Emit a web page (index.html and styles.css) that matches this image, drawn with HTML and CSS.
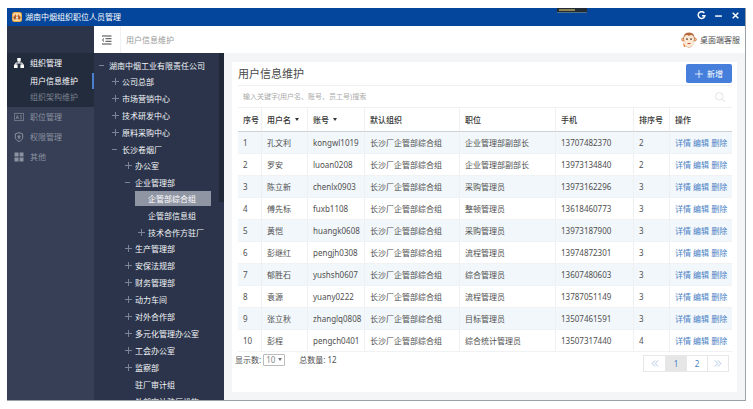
FILE: index.html
```html
<!DOCTYPE html>
<html lang="zh-CN">
<head>
<meta charset="utf-8">
<title>湖南中烟组织职位人员管理</title>
<link rel="stylesheet" href="styles.css">
</head>
<body>
<div class="window">
  <header class="titlebar">
    <svg class="logo" viewBox="0 0 20 20"><rect width="20" height="20" rx="5" fill="#e9a94b"/><rect x="2" y="2" width="16" height="16" rx="4" fill="#f6d9a0"/><path d="M3 9h14v4H3z" fill="#5a4a3c"/><path d="M6 4l3 4-2 7H4zM14 4l-3 4 2 7h3z" fill="#c2571f"/><circle cx="10" cy="11" r="2" fill="#fff"/></svg>
    <h1>湖南中烟组织职位人员管理</h1>
    <span class="notch"></span>
    <div class="controls">
      <button aria-label="刷新"><svg viewBox="0 0 8 8"><path d="M6.500 1.800A3 3 0 1 0 7 4.300H4.500"/></svg></button>
      <button aria-label="最小化"><svg viewBox="0 0 8 8"><path d="M1 4.500h6"/></svg></button>
      <button aria-label="关闭"><svg viewBox="0 0 8 8"><path d="M1.500 1.500l5 5M6.500 1.500l-5 5"/></svg></button>
    </div>
  </header>
  <div class="body">
    <nav class="sidebar">
      <div class="sidebar-top"></div>
      <div class="group">
        <a class="item on" href="#"><svg viewBox="0 0 10 10"><path d="M3.300 0h3.400v3.600H3.300zM0 6.400h3.600V10H0zM6.400 6.400H10V10H6.400z" fill="currentColor"/><path d="M5 3v2M1.800 7V5h6.400v2" fill="none" stroke="currentColor"/></svg>组织管理</a>
        <a class="sub on" href="#">用户信息维护</a>
        <a class="sub" href="#">组织架构维护</a>
      </div>
      <a class="item" href="#"><svg viewBox="0 0 10 10" fill="none" stroke="currentColor" stroke-width=".7"><path d="M.4 1.400h9.200v7.200H.4zM2 7l1.300-3.500L4.600 7M2.400 5.800h1.800M6 3.500h1.500M6 5h2M6 6.800h2"/></svg>职位管理</a>
      <a class="item" href="#"><svg viewBox="0 0 10 10" fill="none" stroke="currentColor"><path d="M5 .6l3.700 1.300v3.300c0 2-1.600 3.400-3.700 4.300-2.100-.9-3.700-2.300-3.700-4.300V1.900z"/><path d="M3.400 4.300h3.200M5 2.800v4.200M3.700 5.800h2.600" stroke-width=".9"/></svg>权限管理</a>
      <a class="item" href="#"><svg viewBox="0 0 10 10"><path d="M.5 .5h4.100v4.100H.5zM5.600 .5h3.900v4.100H5.600zM.5 5.600h4.100v3.900H.5zM5.600 5.600h3.900v3.900H5.600z" fill="currentColor"/></svg>其他</a>
    </nav>
    <div class="main">
      <div class="topbar">
        <button class="fold" aria-label="收起菜单"><svg viewBox="0 0 10 10"><path d="M0 1h9.500M3.500 3.700h6M3.500 6.300h6M0 9h9.500M2 3.500L.4 5 2 6.500"/></svg></button>
        <span class="crumb">用户信息维护</span>
        <a class="service" href="#"><svg viewBox="0 0 32 32"><circle cx="4.500" cy="15" r="4" fill="#d98e5b"/><circle cx="27.500" cy="15" r="4" fill="#d98e5b"/><circle cx="4.500" cy="15" r="2" fill="#f8d5b0"/><circle cx="27.500" cy="15" r="2" fill="#f8d5b0"/><path d="M16 1C7 1 4 8 5 16s5 15 11 15 10-7 11-15S25 1 16 1z" fill="#b4683d"/><path d="M16 8c-4-4-10-2-10 5 0 3 1 4 0 7 0 7 4 10 10 10s10-3 10-10c-1-3 0-4 0-7 0-7-6-9-10-5z" fill="#fbe8d2"/><circle cx="12" cy="14" r="1.700" fill="#3c2820"/><circle cx="20" cy="14" r="1.700" fill="#3c2820"/><path d="M12 22c2 3 6 3 8 0z" fill="#c44a3a"/><path d="M4 22c2 1 4 4 5 8H6z" fill="#e47b39"/></svg>桌面端客服</a>
      </div>
      <div class="workspace">
        <aside class="tree">
          <ul>
            <li><a class="open" href="#">湖南中烟工业有限责任公司</a>
              <ul>
                <li><a class="shut" href="#">公司总部</a></li>
                <li><a class="shut" href="#">市场营销中心</a></li>
                <li><a class="shut" href="#">技术研发中心</a></li>
                <li><a class="shut" href="#">原料采购中心</a></li>
                <li><a class="open" href="#">长沙卷烟厂</a>
                  <ul>
                    <li><a class="shut" href="#">办公室</a></li>
                    <li><a class="open" href="#">企业管理部</a>
                      <ul>
                        <li><a class="selected" href="#">企管部综合组</a></li>
                        <li><a href="#">企管部信息组</a></li>
                        <li><a class="shut" href="#">技术合作方驻厂</a></li>
                      </ul>
                    </li>
                    <li><a class="shut" href="#">生产管理部</a></li>
                    <li><a class="shut" href="#">安保法规部</a></li>
                    <li><a class="shut" href="#">财务管理部</a></li>
                    <li><a class="shut" href="#">动力车间</a></li>
                    <li><a class="shut" href="#">对外合作部</a></li>
                    <li><a class="shut" href="#">多元化管理办公室</a></li>
                    <li><a class="shut" href="#">工会办公室</a></li>
                    <li><a class="shut" href="#">监察部</a></li>
                    <li><a href="#">驻厂审计组</a></li>
                    <li><a href="#">外部审计驻厂机构</a></li>
                  </ul>
                </li>
              </ul>
            </li>
          </ul>
          <span class="thumb"></span>
        </aside>
        <main class="card">
          <div class="card-head"><h2>用户信息维护</h2><button class="add"><svg viewBox="0 0 8 8"><path d="M4 0v8M0 4h8"/></svg>新增</button></div>
          <div class="search"><input type="text" aria-label="搜索" placeholder="输入关键字(用户名、账号、员工号)搜索"><button aria-label="搜索"><svg viewBox="0 0 10 10"><circle cx="4.300" cy="4.300" r="3.700"/><path d="M7 7l3 3"/></svg></button></div>
          <table>
            <colgroup><col class="c-no"><col class="c-name"><col class="c-acct"><col class="c-org"><col class="c-job"><col class="c-tel"><col class="c-sort"><col></colgroup>
            <thead><tr><th>序号</th><th>用户名<i class="caret"></i></th><th>账号<i class="caret"></i></th><th>默认组织</th><th>职位</th><th>手机</th><th>排序号</th><th>操作</th></tr></thead>
            <tbody>
              <tr><td>1</td><td>孔文利</td><td>kongwl1019</td><td>长沙厂企管部综合组</td><td>企业管理部副部长</td><td>13707482370</td><td>2</td><td><a href="#">详情</a> <a href="#">编辑</a> <a href="#">删除</a></td></tr>
              <tr><td>2</td><td>罗安</td><td>luoan0208</td><td>长沙厂企管部综合组</td><td>企业管理部副部长</td><td>13973134840</td><td>2</td><td><a href="#">详情</a> <a href="#">编辑</a> <a href="#">删除</a></td></tr>
              <tr><td>3</td><td>陈立新</td><td>chenlx0903</td><td>长沙厂企管部综合组</td><td>采购管理员</td><td>13973162296</td><td>3</td><td><a href="#">详情</a> <a href="#">编辑</a> <a href="#">删除</a></td></tr>
              <tr><td>4</td><td>傅先标</td><td>fuxb1108</td><td>长沙厂企管部综合组</td><td>整顿管理员</td><td>13618460773</td><td>3</td><td><a href="#">详情</a> <a href="#">编辑</a> <a href="#">删除</a></td></tr>
              <tr><td>5</td><td>黄恺</td><td>huangk0608</td><td>长沙厂企管部综合组</td><td>采购管理员</td><td>13973187900</td><td>3</td><td><a href="#">详情</a> <a href="#">编辑</a> <a href="#">删除</a></td></tr>
              <tr><td>6</td><td>彭继红</td><td>pengjh0308</td><td>长沙厂企管部综合组</td><td>流程管理员</td><td>13974872301</td><td>3</td><td><a href="#">详情</a> <a href="#">编辑</a> <a href="#">删除</a></td></tr>
              <tr><td>7</td><td>郁胜石</td><td>yushsh0607</td><td>长沙厂企管部综合组</td><td>综合管理员</td><td>13607480603</td><td>3</td><td><a href="#">详情</a> <a href="#">编辑</a> <a href="#">删除</a></td></tr>
              <tr><td>8</td><td>袁源</td><td>yuany0222</td><td>长沙厂企管部综合组</td><td>流程管理员</td><td>13787051149</td><td>3</td><td><a href="#">详情</a> <a href="#">编辑</a> <a href="#">删除</a></td></tr>
              <tr><td>9</td><td>张立秋</td><td>zhanglq0808</td><td>长沙厂企管部综合组</td><td>目标管理员</td><td>13507461591</td><td>3</td><td><a href="#">详情</a> <a href="#">编辑</a> <a href="#">删除</a></td></tr>
              <tr><td>10</td><td>彭程</td><td>pengch0401</td><td>长沙厂企管部综合组</td><td>综合统计管理员</td><td>13507317440</td><td>4</td><td><a href="#">详情</a> <a href="#">编辑</a> <a href="#">删除</a></td></tr>
            </tbody>
          </table>
          <div class="card-foot">
            <label for="size">显示数:</label>
            <span class="size"><select id="size"><option>10</option><option>20</option></select></span>
            <span class="total">总数量: 12</span>
            <div class="pager">
              <a href="#" aria-label="上一页"><svg viewBox="0 0 8 8"><path d="M4 .5L.8 4 4 7.500M7.500 .5L4.300 4l3.200 3.500"/></svg></a><a class="now" href="#">1</a><a href="#">2</a><a href="#" aria-label="下一页"><svg viewBox="0 0 8 8"><path d="M.5 .5L3.700 4 .5 7.500M4 .5L7.200 4 4 7.500"/></svg></a>
            </div>
          </div>
        </main>
      </div>
    </div>
  </div>
</div>
</body>
</html>
```
FILE: styles.css
```css
* { box-sizing: border-box; }
body {
  margin: 0;
  padding: 8px 7px;
  height: 100vh;
  background: #fff;
  color: #505050;
  font: 8px/16px "Noto Sans", "Noto Sans CJK SC", sans-serif;
}
a { color: inherit; text-decoration: none; }
button { padding: 0; border: 0; background: none; color: inherit; font: inherit; display: flex; align-items: center; }
h1, h2, ul { margin: 0; padding: 0; font-weight: normal; list-style: none; }
svg { display: block; flex: none; }

.window { display: flex; flex-direction: column; height: 100%; overflow: hidden; border: solid #9aa1a8; border-width: 0 1px 1px 0; }
.titlebar { position: relative; flex: none; display: flex; align-items: center; height: 18px; padding: 0 5px; background: #03469b; color: #fff; }
.logo { width: 10px; height: 10px; margin-right: 3px; }
.titlebar h1 { font-size: 8px; }
.notch { position: absolute; top: 0; right: 158px; width: 30px; height: 5px; background: #222b35; border-bottom: 1px solid #4f7186; }
.notch::after { content: ""; display: block; width: 16px; height: 2px; margin: 1px 2px; background: #8b8353; }
.controls { display: flex; gap: 8px; margin-left: auto; padding-bottom: 4px; }
.controls svg { width: 9px; height: 9px; fill: none; stroke: #fff; stroke-width: 1.3; }

.body { flex: 1; min-height: 0; display: flex; }
.sidebar { flex: none; width: 87px; background: #363f55; color: #8b92a0; }
.sidebar-top { height: 27px; background: #2b3449; }
.group { padding-bottom: 2px; background: #232c3d; }
.item { display: flex; align-items: center; gap: 6px; height: 20px; padding-left: 7px; }
.item svg { width: 10px; height: 10px; }
.sub { display: block; height: 16px; padding-left: 23px; line-height: 16px; color: #7a828f; }
.sub.on { border-right: 2px solid #4a7fd0; }
.on { color: #fff; }

.main { flex: 1; min-width: 0; display: flex; flex-direction: column; }
.topbar { flex: none; display: flex; align-items: center; height: 27px; padding-right: 5px; background: #fff; }
.fold { width: 27px; height: 27px; justify-content: center; border-right: 1px solid #f0f1f3; }
.fold svg { width: 10px; height: 10px; fill: none; stroke: #444; }
.crumb { margin-left: 5px; color: #999; }
.service { display: flex; align-items: center; gap: 3px; margin-left: auto; }
.service svg { width: 16px; height: 16px; }

.workspace { flex: 1; min-height: 0; display: flex; background: #f4f5f7; }
.tree { position: relative; flex: none; width: 130px; padding: 4px 0 0 2px; overflow: hidden; background: #2b344a; color: #f4f6f9; }
.tree ul ul { margin: -1px 0; padding-left: 13px; }
.tree a { position: relative; display: block; height: 17px; padding-left: 13px; line-height: 17px; white-space: nowrap; }
.open::before, .shut::before, .shut::after { content: ""; position: absolute; top: 8px; left: 3px; width: 7px; height: 1px; background: #7b8496; }
.open::before { width: 5px; }
.shut::after { top: 5px; left: 6px; width: 1px; height: 7px; }
.tree .selected { height: 15px; margin: 1px 13px 1px 0; line-height: 15px; background: #8f95a3; color: #fff; }
.thumb { position: absolute; top: 0; right: 0; width: 5px; height: 149px; background: #202838; }

.card { flex: 1; min-width: 0; display: flex; flex-direction: column; margin: 9px 8px 8px; padding: 0 5px 0 6px; background: #fff; }
.card-head { display: flex; align-items: center; height: 24px; border-bottom: 1px solid #f0f0f0; }
.card-head h2 { font-size: 11px; color: #4a4a4a; }
.add { justify-content: center; gap: 4px; width: 46px; height: 19px; margin-left: auto; border-radius: 2px; background: #467fdb; color: #fff; }
.add svg { width: 8px; height: 8px; fill: none; stroke: #fff; stroke-width: .8; }
.search { display: flex; align-items: center; height: 21px; padding: 0 7px 0 5px; }
.search input { flex: 1; min-width: 0; padding: 0; border: 0; outline: 0; background: none; font: inherit; font-size: 7px; }
.search input::placeholder { color: #aaa; }
.search svg { width: 10px; height: 10px; fill: none; stroke: #d9dcdf; stroke-width: .8; }

table { width: 100%; table-layout: fixed; border-collapse: separate; border-spacing: 0; border-top: 1px solid #f0f0f0; }
th, td { height: 22px; padding: 0 0 0 5px; border-right: 1px solid #eef0f2; border-bottom: 1px solid #f0f2f4; line-height: 16px; text-align: left; white-space: nowrap; }
th { height: 24px; border-bottom-color: #ccd1d6; color: #333; font-weight: 500; }
th:last-child, td:last-child { border-right: 0; }
tbody tr:nth-child(odd) { background: #f2f7fb; }
td a { color: #4a80c4; }
.c-no { width: 24px; }
.c-name { width: 46px; }
.c-acct { width: 57px; }
.c-org { width: 95px; }
.c-job { width: 96px; }
.c-tel { width: 78px; }
.c-sort { width: 36px; }
.caret { display: inline-block; margin-left: 4px; vertical-align: 2px; border: solid transparent; border-width: 3px 2px 0; border-top-color: #333; }

.card-foot { display: flex; align-items: flex-start; }
.card-foot label { margin-left: -3px; }
.size { position: relative; margin: 2px 14px 0 2px; line-height: 10px; }
.size::after { content: ""; position: absolute; top: 4px; right: 3px; border: solid transparent; border-width: 3px 2px 0; border-top-color: #777; }
.size select { appearance: none; display: block; width: 22px; height: 12px; padding: 0 0 0 2px; border: 1px solid #bbb; border-radius: 1px; background: #fff; color: #888; font: inherit; }
.pager { display: flex; margin: 3px 3px 0 auto; border: 1px solid #e6e8ea; }
.pager a { display: flex; align-items: center; justify-content: center; width: 21px; height: 15px; color: #4a80c4; }
.pager a + a { border-left: 1px solid #e6e8ea; }
.pager .now { background: #e6e6e6; }
.pager svg { width: 8px; height: 7px; fill: none; stroke: #7ba3d8; stroke-width: .7; }
```
